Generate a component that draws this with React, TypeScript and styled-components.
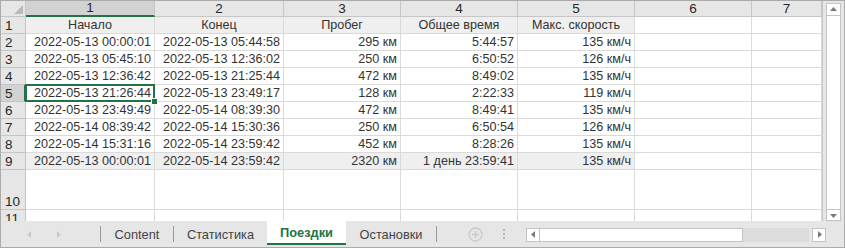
import React from 'react';
import styled, { createGlobalStyle, css } from 'styled-components';

const GREEN = '#217346';

const GlobalStyle = createGlobalStyle`
  body {
    margin: 0;
    font-family: 'Liberation Sans', Arial, sans-serif;
    background: #ffffff;
  }
`;

const Frame = styled.div`
  width: 845px;
  height: 248px;
  box-sizing: border-box;
  border: 1px solid #ababab;
  background: #e6e6e6;
  display: flex;
  flex-direction: column;
  overflow: hidden;
`;

const Top = styled.div`
  display: flex;
  height: 220px;
`;

const Sheet = styled.div`
  width: 823px;
  height: 220px;
  background: #ffffff;
  display: grid;
  grid-template-columns: 25px 129px 129px 117px 117px 117px 117px 1fr;
  grid-template-rows: 16px repeat(9, 17px) 40px 17px;
  overflow: hidden;
  border-right: 1px solid #c6c6c6;
`;

const HeadCell = styled.div<{ $selected?: boolean; $side?: boolean }>`
  box-sizing: border-box;
  background: ${(p) => (p.$selected ? '#d2d2d2' : '#e6e6e6')};
  border-right: 1px solid #c6c6c6;
  border-bottom: 1px solid #c6c6c6;
  color: #262626;
  font-size: 13.5px;
  display: flex;
  align-items: flex-end;
  justify-content: center;
  line-height: 15px;
  position: relative;
  ${(p) =>
    p.$selected &&
    (p.$side
      ? css`
          border-right: 2px solid ${GREEN};
        `
      : css`
          border-bottom: 2px solid ${GREEN};
        `)}
  ${(p) =>
    p.$side &&
    css`
      justify-content: flex-start;
      padding-left: 4px;
    `}
`;

const Cell = styled.div<{ $align?: 'left' | 'right' | 'center'; $shade?: boolean; $active?: boolean }>`
  box-sizing: border-box;
  border-right: 1px solid #dadada;
  border-bottom: 1px solid #dadada;
  background: ${(p) => (p.$shade ? '#efefef' : '#ffffff')};
  color: #333333;
  font-size: 12.6px;
  line-height: 15px;
  padding: 0 3px 0 3px;
  display: flex;
  align-items: flex-end;
  justify-content: ${(p) =>
    p.$align === 'center' ? 'center' : p.$align === 'left' ? 'flex-start' : 'flex-end'};
  white-space: nowrap;
  position: relative;
  ${(p) =>
    p.$active &&
    css`
      &::after {
        content: '';
        position: absolute;
        left: -1px;
        top: -1px;
        right: -1px;
        bottom: -1px;
        border: 2px solid ${GREEN};
      }
      &::before {
        content: '';
        position: absolute;
        right: -4px;
        bottom: -4px;
        width: 5px;
        height: 5px;
        background: ${GREEN};
        border: 1px solid #ffffff;
        z-index: 2;
      }
    `}
`;

const Corner = styled.div`
  box-sizing: border-box;
  background: #e6e6e6;
  border-right: 1px solid #c6c6c6;
  border-bottom: 1px solid #c6c6c6;
  display: flex;
  align-items: flex-end;
  justify-content: flex-end;
  padding: 0 2px 2px 0;
`;

const VScroll = styled.div`
  flex: 1;
  display: flex;
  flex-direction: column;
  padding: 2px 3px 0 3px;
`;

const ScrollBtn = styled.div<{ $h?: number }>`
  box-sizing: border-box;
  width: 15px;
  height: ${(p) => p.$h ?? 13}px;
  background: #ffffff;
  border: 1px solid #c3c3c3;
  display: flex;
  align-items: center;
  justify-content: center;
`;

const VThumb = styled.div`
  flex: 1;
  box-sizing: border-box;
  width: 15px;
  background: #ffffff;
  border: 1px solid #c3c3c3;
  border-top: none;
  border-bottom: none;
`;

const TabBar = styled.div`
  flex: 1;
  display: flex;
  align-items: stretch;
  padding-right: 18px;
`;

const NavArea = styled.div`
  width: 99px;
  display: flex;
  align-items: center;
  gap: 22px;
  padding-left: 25px;
  box-sizing: border-box;
`;

const Sep = styled.div`
  width: 1px;
  height: 16px;
  background: #9a9a9a;
  align-self: center;
`;

const Tab = styled.div<{ $active?: boolean; $w: number }>`
  width: ${(p) => p.$w}px;
  box-sizing: border-box;
  display: flex;
  align-items: center;
  justify-content: center;
  font-size: 12.8px;
  color: #444444;
  padding-top: 1px;
  ${(p) =>
    p.$active &&
    css`
      background: #ffffff;
      color: ${GREEN};
      font-weight: bold;
      height: 24px;
      border-bottom: 2px solid ${GREEN};
    `}
`;

const Tools = styled.div`
  width: 89px;
  display: flex;
  align-items: center;
  padding-left: 31px;
  gap: 20px;
  box-sizing: border-box;
`;

const Dots = styled.div`
  display: flex;
  flex-direction: column;
  gap: 2px;
  & > span {
    width: 2px;
    height: 2px;
    background: #b5b5b5;
  }
`;

const HScroll = styled.div`
  flex: 1;
  display: flex;
  align-items: center;
  padding-top: 1px;
`;

const HBtn = styled.div`
  box-sizing: border-box;
  width: 14px;
  height: 14px;
  background: #ffffff;
  border: 1px solid #c3c3c3;
  display: flex;
  align-items: center;
  justify-content: center;
`;

const HThumb = styled.div`
  width: 203px;
  height: 14px;
  box-sizing: border-box;
  background: #ffffff;
  border: 1px solid #c3c3c3;
  border-left: none;
`;

const HTrack = styled.div`
  flex: 1;
  height: 14px;
  background: #dcdcdc;
  margin-right: 3px;
`;

const Tri: React.FC<{ dir: 'up' | 'down' | 'left' | 'right'; color?: string; size?: number }> = ({
  dir,
  color = '#7a7a7a',
  size = 7,
}) => {
  const pts = {
    up: '0,5 7,5 3.5,1',
    down: '0,2 7,2 3.5,6',
    left: '5,0 5,7 1,3.5',
    right: '2,0 2,7 6,3.5',
  }[dir];
  return (
    <svg width={size} height={size} viewBox="0 0 7 7">
      <polygon points={pts} fill={color} />
    </svg>
  );
};

const headers = ['Начало', 'Конец', 'Пробег', 'Общее время', 'Макс. скорость'];

const rows = [
  ['2022-05-13 00:00:01', '2022-05-13 05:44:58', '295 км', '5:44:57', '135 км/ч'],
  ['2022-05-13 05:45:10', '2022-05-13 12:36:02', '250 км', '6:50:52', '126 км/ч'],
  ['2022-05-13 12:36:42', '2022-05-13 21:25:44', '472 км', '8:49:02', '135 км/ч'],
  ['2022-05-13 21:26:44', '2022-05-13 23:49:17', '128 км', '2:22:33', '119 км/ч'],
  ['2022-05-13 23:49:49', '2022-05-14 08:39:30', '472 км', '8:49:41', '135 км/ч'],
  ['2022-05-14 08:39:42', '2022-05-14 15:30:36', '250 км', '6:50:54', '126 км/ч'],
  ['2022-05-14 15:31:16', '2022-05-14 23:59:42', '452 км', '8:28:26', '135 км/ч'],
  ['2022-05-13 00:00:01', '2022-05-14 23:59:42', '2320 км', '1 день 23:59:41', '135 км/ч'],
];

const tabs = [
  { name: 'Content', w: 72 },
  { name: 'Статистика', w: 93 },
  { name: 'Поездки', w: 79, active: true },
  { name: 'Остановки', w: 90 },
];

const App: React.FC = () => {
  return (
    <>
      <GlobalStyle />
      <Frame>
        <Top>
          <Sheet>
            <Corner>
              <svg width="9" height="9" viewBox="0 0 9 9">
                <polygon points="9,0 9,9 0,9" fill="#b9b9b9" />
              </svg>
            </Corner>
            {[1, 2, 3, 4, 5, 6, 7].map((n) => (
              <HeadCell key={n} $selected={n === 1}>
                {n}
              </HeadCell>
            ))}

            <HeadCell $side>1</HeadCell>
            {headers.map((h) => (
              <Cell key={h} $align="center" $shade>
                {h}
              </Cell>
            ))}
            <Cell />
            <Cell />

            {rows.map((r, i) => {
              const rowNo = i + 2;
              const shade = rowNo === 9;
              return (
                <React.Fragment key={rowNo}>
                  <HeadCell $side $selected={rowNo === 5}>
                    {rowNo}
                  </HeadCell>
                  {r.map((v, j) => (
                    <Cell key={j} $shade={shade} $active={rowNo === 5 && j === 0}>
                      {v}
                    </Cell>
                  ))}
                  <Cell />
                  <Cell />
                </React.Fragment>
              );
            })}

            {[10, 11].map((n) => (
              <React.Fragment key={n}>
                <HeadCell $side>{n}</HeadCell>
                {[0, 1, 2, 3, 4, 5, 6].map((j) => (
                  <Cell key={j} />
                ))}
              </React.Fragment>
            ))}
          </Sheet>
          <VScroll>
            <ScrollBtn>
              <Tri dir="up" />
            </ScrollBtn>
            <VThumb />
            <ScrollBtn $h={12}>
              <Tri dir="down" />
            </ScrollBtn>
          </VScroll>
        </Top>
        <TabBar>
          <NavArea>
            <Tri dir="left" color="#c8c8c8" />
            <Tri dir="right" color="#c8c8c8" />
          </NavArea>
          <Sep />
          {tabs.map((t, i) => (
            <React.Fragment key={t.name}>
              <Tab $w={t.w} $active={t.active}>
                {t.name}
              </Tab>
              {i === 0 && <Sep />}
            </React.Fragment>
          ))}
          <Sep />
          <Tools>
            <svg width="15" height="15" viewBox="0 0 15 15">
              <circle cx="7.5" cy="7.5" r="6.5" fill="none" stroke="#c8c8c8" strokeWidth="1.3" />
              <path d="M7.5 4v7M4 7.5h7" stroke="#c8c8c8" strokeWidth="1.3" />
            </svg>
            <Dots>
              <span />
              <span />
              <span />
            </Dots>
          </Tools>
          <HScroll>
            <HBtn>
              <Tri dir="left" />
            </HBtn>
            <HThumb />
            <HTrack />
            <HBtn>
              <Tri dir="right" />
            </HBtn>
          </HScroll>
        </TabBar>
      </Frame>
    </>
  );
};

export default App;
